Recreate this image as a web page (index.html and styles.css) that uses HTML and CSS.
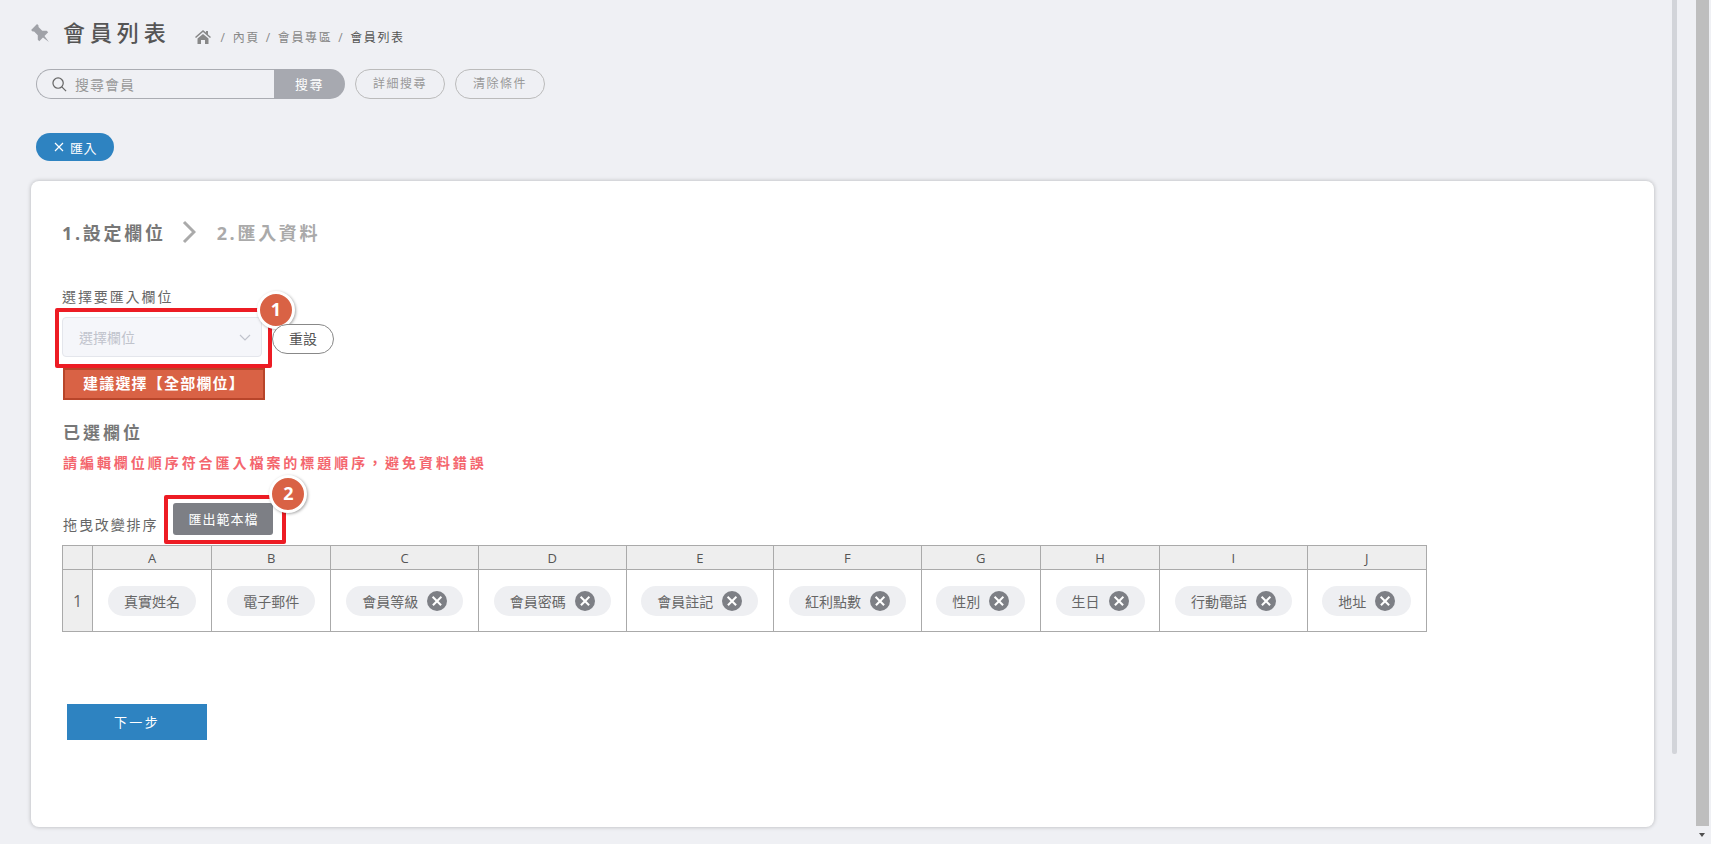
FILE: index.html
```html
<!DOCTYPE html>
<html lang="zh-Hant">
<head>
  <meta charset="UTF-8">
  <title>會員列表</title>
  <link rel="stylesheet" href="styles.css">
</head>
<body>

<div class="window">
  <div class="main">

    <div class="title-row">
      <svg class="pin" viewBox="0 0 20 20"><path transform="rotate(-45 10 10)" d="M6 0h8v2l-1 1v5l3 3v2h-5l-1 7-1-7H4v-2l3-3V3L6 2z"/></svg>
      <h1>會員列表</h1>
      <div class="crumbs">
        <svg class="home" viewBox="0 0 16 14"><path d="M8 0 0 7l1 1 7-6 7 6 1-1-3-2.6V1h-2v1.6z"/><path d="M2.5 8.5 8 4l5.5 4.5V14H10v-4H6v4H2.5z"/></svg>
        <span>/</span><span>內頁</span><span>/</span><span>會員專區</span><span>/</span><span class="current">會員列表</span>
      </div>
    </div>

    <div class="search-row">
      <div class="search">
        <div class="search-input">
          <svg class="glass" viewBox="0 0 16 16"><circle cx="6.5" cy="6.5" r="5.5"/><path d="M10.5 10.5 15 15"/></svg>
          <span>搜尋會員</span>
        </div>
        <div class="search-btn">搜尋</div>
      </div>
      <div class="line-btn">詳細搜尋</div>
      <div class="line-btn">清除條件</div>
    </div>

    <div class="import-btn">
      <svg viewBox="0 0 10 10"><path d="M1 1l8 8M9 1l-8 8"/></svg>
      <span>匯入</span>
    </div>

    <div class="card">
      <div class="steps">
        <span class="step">1.設定欄位</span>
        <svg class="step-arrow" viewBox="0 0 14 24"><path d="M2 2l10 10L2 22"/></svg>
        <span class="step off">2.匯入資料</span>
      </div>

      <div class="label pick-label">選擇要匯入欄位</div>
      <div class="pick-row">
        <div class="select">
          <span>選擇欄位</span>
          <svg viewBox="0 0 12 7"><path d="M1 1l5 5 5-5"/></svg>
          <div class="mark mark-one"></div>
          <div class="badge badge-one">1</div>
        </div>
        <div class="reset-btn">重設</div>
      </div>
      <div class="suggest">建議選擇【全部欄位】</div>

      <h2>已選欄位</h2>
      <div class="warn">請編輯欄位順序符合匯入檔案的標題順序，避免資料錯誤</div>

      <div class="sort-row">
        <div class="label">拖曳改變排序</div>
        <div class="export-btn">
          匯出範本檔
          <div class="mark mark-two"></div>
          <div class="badge badge-two">2</div>
        </div>
      </div>

      <table class="fields">
        <colgroup>
          <col class="col-index">
          <col class="col-s"><col class="col-s">
          <col class="col-w"><col class="col-w"><col class="col-w"><col class="col-w">
          <col class="col-s"><col class="col-s">
          <col class="col-w">
          <col class="col-s">
        </colgroup>
        <thead>
          <tr><th></th><th>A</th><th>B</th><th>C</th><th>D</th><th>E</th><th>F</th><th>G</th><th>H</th><th>I</th><th>J</th></tr>
        </thead>
        <tbody>
          <tr>
            <td class="row-no">1</td>
            <td><span class="tag">真實姓名</span></td>
            <td><span class="tag">電子郵件</span></td>
            <td><span class="tag">會員等級<i class="tag-x"></i></span></td>
            <td><span class="tag">會員密碼<i class="tag-x"></i></span></td>
            <td><span class="tag">會員註記<i class="tag-x"></i></span></td>
            <td><span class="tag">紅利點數<i class="tag-x"></i></span></td>
            <td><span class="tag">性別<i class="tag-x"></i></span></td>
            <td><span class="tag">生日<i class="tag-x"></i></span></td>
            <td><span class="tag">行動電話<i class="tag-x"></i></span></td>
            <td><span class="tag">地址<i class="tag-x"></i></span></td>
          </tr>
        </tbody>
      </table>

      <div class="next-btn">下一步</div>
    </div>
  </div>

  <div class="inner-scroll"></div>

  <div class="page-scroll">
    <div class="page-thumb"></div>
    <div class="page-arrow"></div>
  </div>
</div>

</body>
</html>
```

FILE: styles.css
```css
* { box-sizing: border-box; margin: 0; padding: 0; }
html, body { height: 100%; overflow: hidden; }
body {
  font-family: "Open Sans", "Noto Sans CJK TC", sans-serif;
  background: #eff0f4;
  color: #666;
  font-size: 14px;
}
.window { display: flex; height: 844px; }
.main { width: 1672px; padding: 18px 18px 0 31px; }

/* header */
.title-row { display: flex; align-items: center; height: 28px; }
.pin { width: 21px; height: 21px; margin: 4px 11px 0 0; fill: #a0a2a8; }
h1 { font-size: 22px; font-weight: 500; letter-spacing: 4.9px; color: #555; line-height: 28px; }
.crumbs {
  display: flex; align-items: center; gap: 6px;
  margin: 10px 0 0 24px;
  font-size: 12px; letter-spacing: 1.6px; color: #888;
}
.crumbs .current { color: #555; }
.home { width: 16px; height: 14px; fill: #888; margin-right: 4px; }

.search-row { display: flex; gap: 10px; margin: 23px 0 0 5px; }
.search { display: flex; width: 309px; height: 30px; }
.search-input {
  display: flex; align-items: center; gap: 8px;
  width: 238px; padding-left: 15px;
  border: 1px solid #aaacb2; border-right: none;
  border-radius: 15px 0 0 15px;
  color: #999; letter-spacing: 1px;
}
.glass { width: 15px; height: 15px; fill: none; stroke: #666; stroke-width: 1.3; }
.search-btn {
  flex: 1; background: #a7a9b0; color: #fff;
  border-radius: 0 15px 15px 0;
  font-size: 13px; letter-spacing: 1.5px;
  text-align: center; line-height: 30px;
}
.line-btn {
  width: 90px; height: 30px;
  border: 1px solid #bbb; border-radius: 15px;
  color: #999; font-size: 12px; letter-spacing: 1.5px;
  text-align: center; line-height: 28px;
}
.import-btn {
  display: flex; align-items: center; gap: 6px;
  height: 28px; width: 78px; margin: 34px 0 0 5px; padding-left: 18px;
  background: #2e83c1; color: #fff; border-radius: 14px;
  font-size: 13px; letter-spacing: 0.5px;
}
.import-btn svg { width: 10px; height: 10px; fill: none; stroke: #fff; stroke-width: 1.2; }

/* card */
.card {
  height: 646px; margin-top: 20px; padding: 39px 31px 0;
  background: #fff; border-radius: 8px;
  box-shadow: 0 0 4px rgba(0, 0, 0, 0.25);
}
.steps { display: flex; align-items: center; height: 24px; }
.step { font-size: 18px; font-weight: 700; letter-spacing: 2.7px; color: #777; }
.step.off { color: #aaa; }
.step-arrow { width: 14px; height: 24px; margin: 0 21px 0 16px; fill: none; stroke: #aaa; stroke-width: 3; }
.label { line-height: 20px; letter-spacing: 1.9px; color: #666; }
.pick-label { margin-top: 43px; }
.pick-row { display: flex; align-items: center; gap: 10px; margin-top: 10px; }
.select {
  position: relative;
  display: flex; align-items: center; justify-content: space-between;
  width: 200px; height: 40px; padding: 0 10px 0 16px;
  background: #f5f6fa; border: 1px solid #e4e6ec; border-radius: 4px;
  color: #c0c3cc;
}
.select svg { width: 12px; height: 7px; fill: none; stroke: #c0c3cc; stroke-width: 1.2; }
.reset-btn {
  width: 62px; height: 30px; margin-top: 4px;
  border: 1px solid #888; border-radius: 15px; background: #fff;
  text-align: center; line-height: 28px; color: #555; position: relative;
}
.suggest {
  width: 202px; height: 32px; margin: 11px 0 0 1px;
  background: #d96245; border: 2px solid #b8452a;
  color: #fff; font-size: 15px; font-weight: 700; letter-spacing: 1.2px;
  text-align: center; line-height: 27px;
}
h2 { margin: 21px 0 0 1px; font-size: 17px; font-weight: 700; letter-spacing: 3px; line-height: 24px; color: #777; }
.warn { margin: 8px 0 0 1px; font-weight: 700; letter-spacing: 2.95px; line-height: 20px; color: #f4666e; }
.sort-row { display: flex; align-items: flex-end; margin: 30px 0 0 1px; }
.export-btn {
  position: relative;
  width: 100px; height: 32px; margin-left: 15px;
  background: #7d7f85; border-radius: 3px;
  color: #fff; font-size: 13px; letter-spacing: 1px;
  text-align: center; line-height: 32px;
}

/* annotations over the screenshot */
.mark { position: absolute; border: 4px solid #ed1c24; border-radius: 2px; }
.mark-one { left: -8px; top: -10px; width: 217px; height: 60px; }
.mark-two { left: -9px; top: -8px; width: 122px; height: 49px; }
.badge {
  position: absolute;
  width: 38px; height: 38px;
  background: #d96245; border: 3px solid #fff; border-radius: 50%;
  box-shadow: 1px 1px 3px rgba(0, 0, 0, 0.35);
  color: #fff; font-size: 18px; font-weight: 700;
  text-align: center; line-height: 31px; letter-spacing: 0;
}
.badge-one { left: 194px; top: -27px; }
.badge-two { left: 96px; top: -28px; }

/* field table */
.fields { width: 1365px; margin-top: 10px; border-collapse: collapse; table-layout: fixed; }
.col-index { width: 30px; }
.col-s { width: 119.2px; }
.col-w { width: 147.6px; }
.fields th, .fields td { border: 1px solid #aaa; text-align: center; }
.fields th { height: 24px; background: #eee; font-size: 13px; font-weight: 400; color: #555; }
.fields td { height: 62px; }
.fields .row-no { background: #eee; font-size: 16px; color: #666; }
.tag {
  display: inline-flex; align-items: center; gap: 9px;
  height: 30px; padding: 0 16px;
  background: #eeeff2; border-radius: 15px;
  color: #666; vertical-align: middle;
}
.tag-x { position: relative; width: 20px; height: 20px; background: #7d7f85; border-radius: 50%; }
.tag-x::before, .tag-x::after {
  content: ""; position: absolute; left: 4px; top: 9px;
  width: 12px; height: 1.6px; background: #fff;
}
.tag-x::before { transform: rotate(45deg); }
.tag-x::after { transform: rotate(-45deg); }
.next-btn {
  width: 140px; height: 36px; margin: 72px 0 0 5px;
  background: #2e83c1; color: #fff; letter-spacing: 2.3px;
  font-size: 13px; text-align: center; line-height: 36px;
}

/* scrollbars */
.inner-scroll { width: 5px; height: 754px; background: #d2d4d9; border-radius: 0 0 2px 2px; }
.page-scroll { position: relative; width: 15px; margin-left: 19px; }
.page-thumb { width: 13px; height: 826px; background: #bebebe; }
.page-arrow {
  position: absolute; left: 3px; top: 833px;
  border-left: 3.5px solid transparent; border-right: 3.5px solid transparent;
  border-top: 4px solid #505050;
}
```
